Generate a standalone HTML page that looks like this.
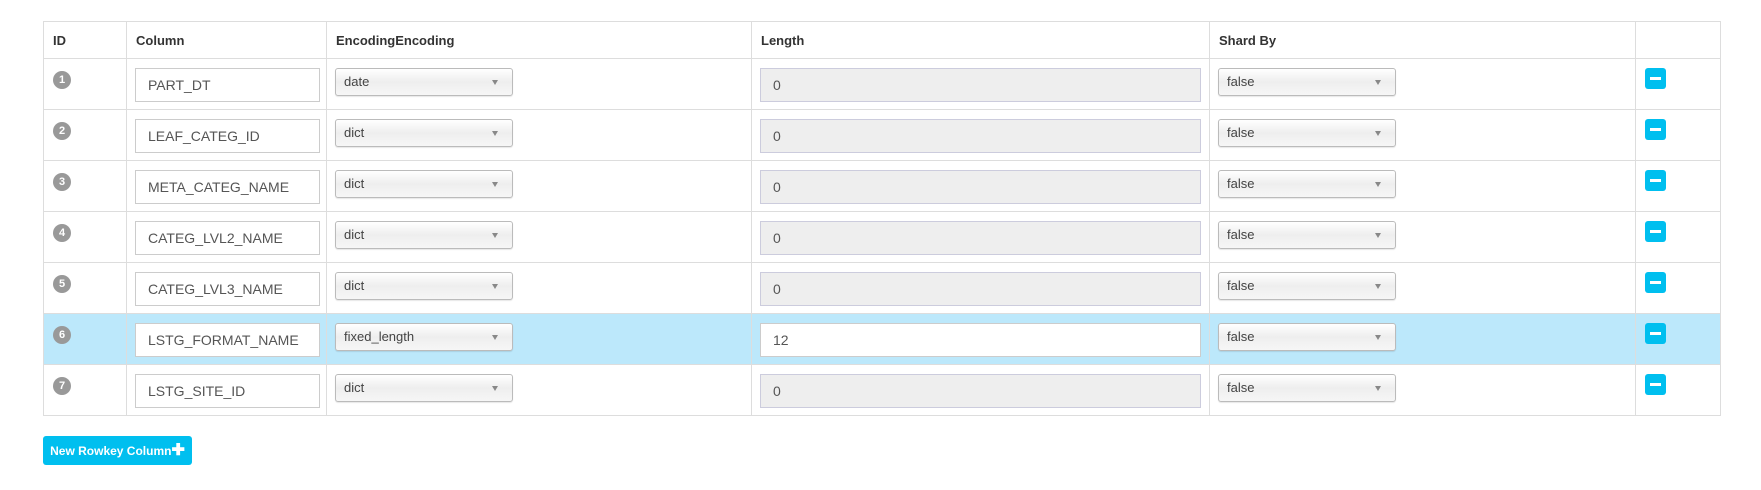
<!DOCTYPE html>
<html><head><style>
body{margin:0;background:#fff;font-family:"Liberation Sans",Arial,sans-serif;width:1761px;height:490px;position:relative;overflow:hidden}
table{position:absolute;left:43px;top:21px;border-collapse:collapse;table-layout:fixed;width:1678px}
td,th{border:1px solid #ddd;padding:0;vertical-align:top;position:relative}
th{height:36px;text-align:left;font-size:13px;font-weight:bold;color:#333;padding-left:9px;vertical-align:middle}
td{height:50px}
tr.hl td{background:#bce8fb}
.badge{position:absolute;left:9px;top:12px;width:18px;height:18px;border-radius:9px;background:#999;color:#fff;font-size:11px;font-weight:bold;text-align:center;line-height:18px}
.inp{position:absolute;left:8px;top:9px;height:32px;border:1px solid #ccc;background:#fff;font-size:14px;color:#555;line-height:32px;padding-left:12px;box-sizing:content-box}
.inp.dis{background:#eee;border-color:#ccd}
.sel{position:absolute;left:8px;top:9px;width:178px;height:28px;border:1px solid #bbb;border-radius:3px;background:linear-gradient(#fff,#eee 50%,#f6f6f6);font-size:13px;color:#444;line-height:26px;padding-left:8px;box-sizing:border-box;box-shadow:0 1px 1px rgba(0,0,0,.1)}
.sel:after{content:"";position:absolute;right:14px;top:11px;border-left:3.5px solid transparent;border-right:3.5px solid transparent;border-top:5px solid #888}
.min{position:absolute;left:9px;top:9px;width:21px;height:21px;border-radius:3px;background:#00bfef}
.min:after{content:"";position:absolute;left:5px;top:9px;width:11px;height:3px;background:#fff}
.btn{position:absolute;left:43px;top:436px;width:149px;height:29px;background:#00bfef;border-radius:3px;color:#fff;font-size:12px;font-weight:bold;line-height:29px;text-align:center}
</style></head><body>
<table>
<colgroup><col style="width:83px"><col style="width:200px"><col style="width:425px"><col style="width:458px"><col style="width:426px"><col style="width:85px"></colgroup>
<tr><th>ID</th><th>Column</th><th>EncodingEncoding</th><th>Length</th><th>Shard By</th><th></th></tr>
<tr><td><div class="badge">1</div></td><td><div class="inp" style="width:171px">PART_DT</div></td><td><div class="sel">date</div></td><td><div class="inp dis" style="width:427px">0</div></td><td><div class="sel">false</div></td><td><div class="min"></div></td></tr>
<tr><td><div class="badge">2</div></td><td><div class="inp" style="width:171px">LEAF_CATEG_ID</div></td><td><div class="sel">dict</div></td><td><div class="inp dis" style="width:427px">0</div></td><td><div class="sel">false</div></td><td><div class="min"></div></td></tr>
<tr><td><div class="badge">3</div></td><td><div class="inp" style="width:171px">META_CATEG_NAME</div></td><td><div class="sel">dict</div></td><td><div class="inp dis" style="width:427px">0</div></td><td><div class="sel">false</div></td><td><div class="min"></div></td></tr>
<tr><td><div class="badge">4</div></td><td><div class="inp" style="width:171px">CATEG_LVL2_NAME</div></td><td><div class="sel">dict</div></td><td><div class="inp dis" style="width:427px">0</div></td><td><div class="sel">false</div></td><td><div class="min"></div></td></tr>
<tr><td><div class="badge">5</div></td><td><div class="inp" style="width:171px">CATEG_LVL3_NAME</div></td><td><div class="sel">dict</div></td><td><div class="inp dis" style="width:427px">0</div></td><td><div class="sel">false</div></td><td><div class="min"></div></td></tr>
<tr class="hl"><td><div class="badge">6</div></td><td><div class="inp" style="width:171px">LSTG_FORMAT_NAME</div></td><td><div class="sel">fixed_length</div></td><td><div class="inp" style="width:427px">12</div></td><td><div class="sel">false</div></td><td><div class="min"></div></td></tr>
<tr><td><div class="badge">7</div></td><td><div class="inp" style="width:171px">LSTG_SITE_ID</div></td><td><div class="sel">dict</div></td><td><div class="inp dis" style="width:427px">0</div></td><td><div class="sel">false</div></td><td><div class="min"></div></td></tr>
</table>
<div class="btn">New Rowkey Column<span style="font-size:16px">✚</span></div>
</body></html>
